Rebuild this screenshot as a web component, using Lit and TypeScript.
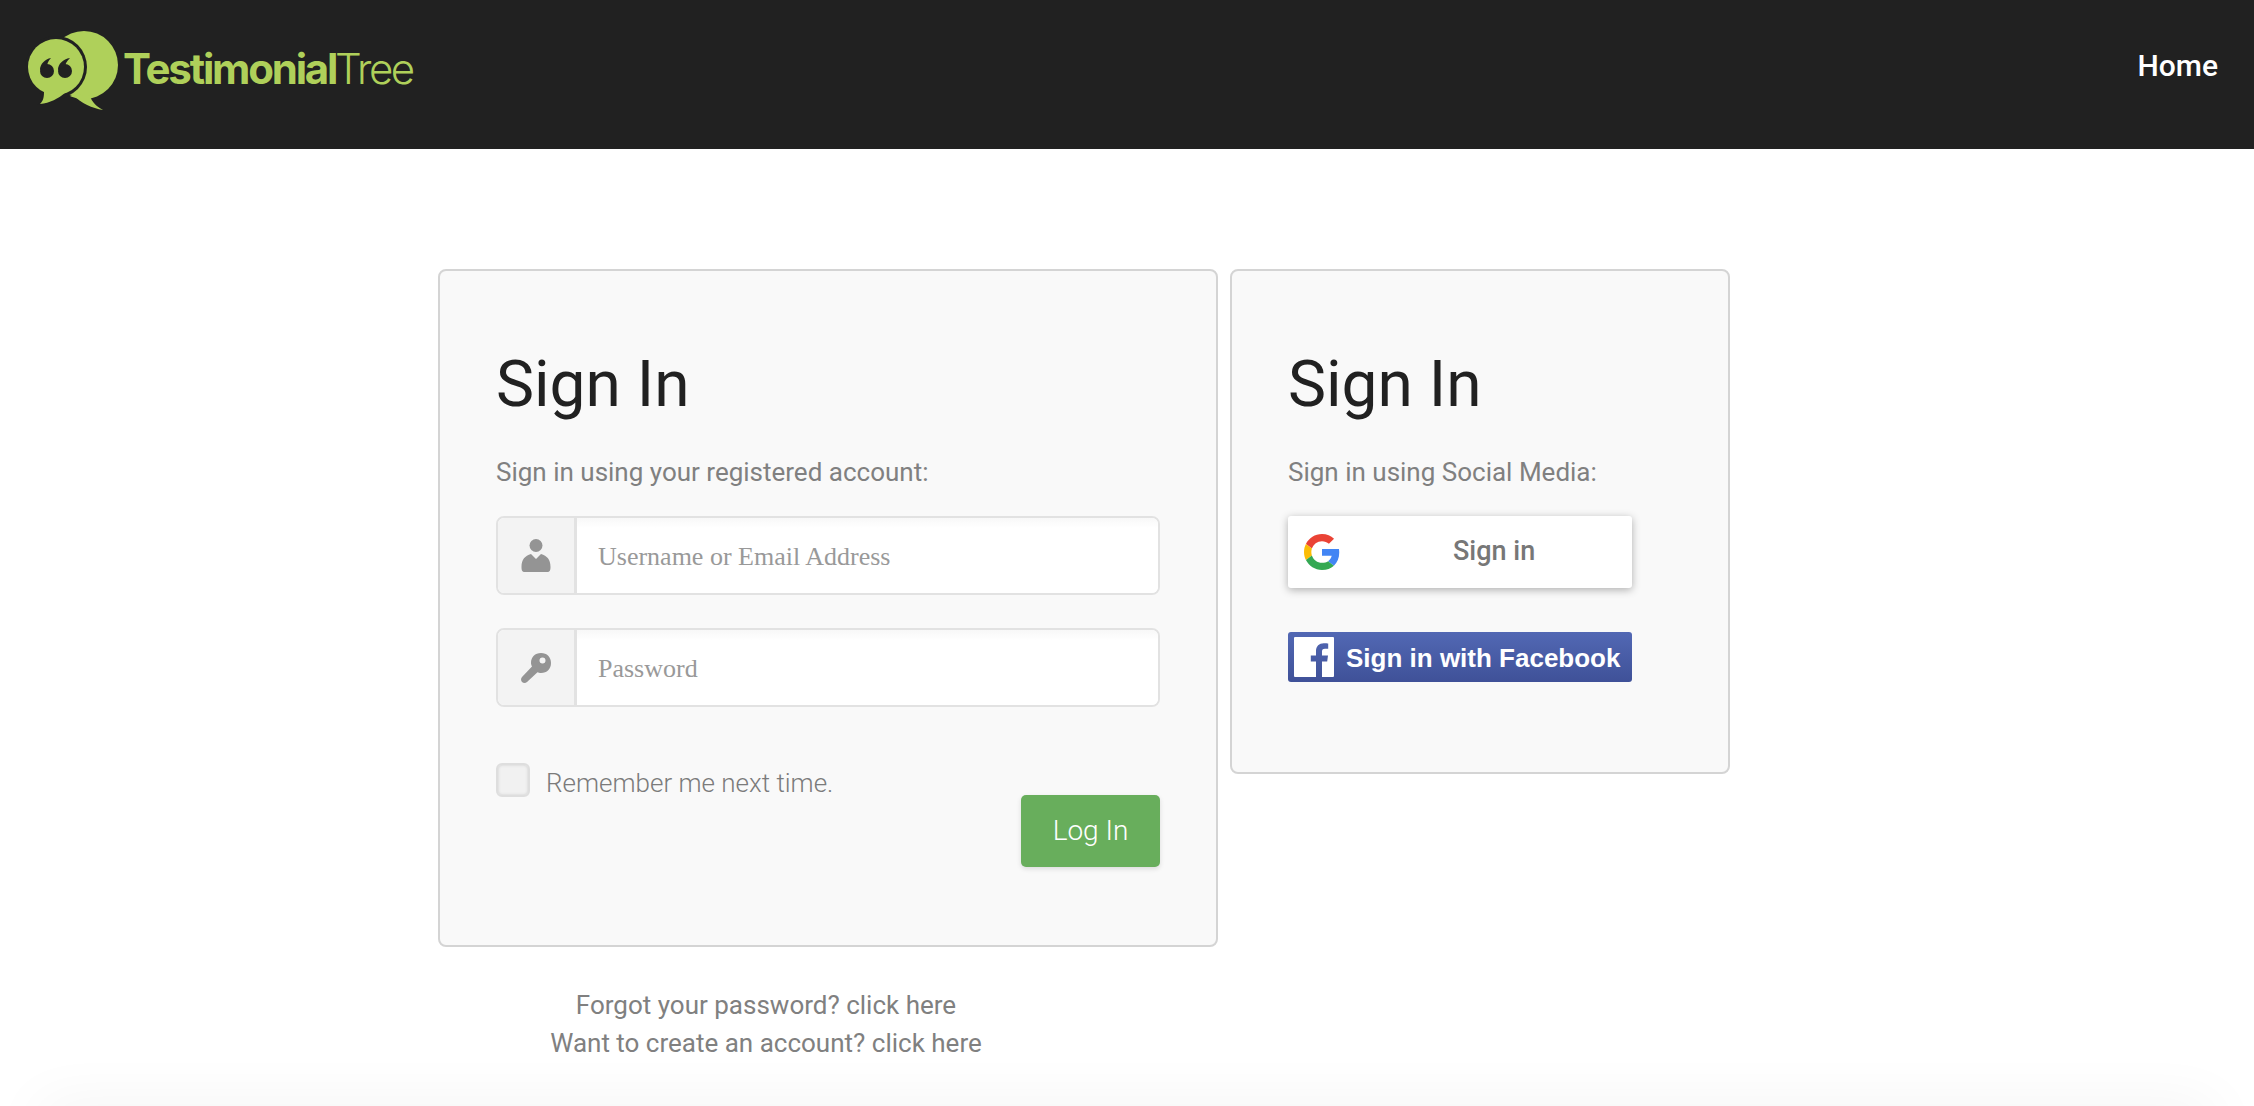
import { LitElement, html, css } from "lit";
import { customElement } from "lit/decorators.js";

@customElement("app-root")
export class AppRoot extends LitElement {
  static styles = css`
    :host { display: block; height: 1106px; overflow: hidden; background: #fff; font-family: Roboto, sans-serif; color: #808080; position: relative; }
    * { box-sizing: border-box; }
    .top { height: 149px; background: #212121; display: flex; justify-content: space-between; align-items: flex-start; }
    .brand { display: flex; align-items: flex-start; }
    .logo { display: block; flex: none; width: 123px; height: 149px; }
    .word { margin-top: 48px; font-family: Inter, sans-serif; font-size: 42px; line-height: 42px; color: #afd05a; white-space: nowrap; }
    .word.b { font-weight: 700; letter-spacing: -2.2px; width: 212px; }
    .word.l { font-weight: 300; letter-spacing: -2.4px; }
    .home { font-size: 30px; font-weight: 500; color: #fff; margin: 48px 36px 0 0; line-height: 36px; }
    .main { display: flex; align-items: flex-start; gap: 12px; padding: 120px 0 0 438px; height: 957px; }
    .left { width: 780px; }
    .card { background: #f9f9f9; border: 2px solid #d4d4d4; border-radius: 8px; padding: 75px 56px 0; }
    .card.a { height: 678px; }
    .card.b { width: 500px; height: 505px; }
    h1 { margin: 0; font-size: 64px; line-height: 78px; font-weight: 400; color: #212121; }
    .sub { margin: 30px 0 0; font-size: 26px; line-height: 36px; }
    .field { display: flex; height: 79px; margin-top: 33px; border: 2px solid #e2e2e2; border-radius: 8px; overflow: hidden; background: #fff; }
    .field.first { margin-top: 26px; }
    .addon { width: 79px; flex: none; background: #f3f3f3; border-right: 3px solid #e2e2e2; display: flex; align-items: center; justify-content: center; }
    .addon svg { display: block; fill: #949494; }
    input { flex: 1; min-width: 0; border: 0; outline: 0; background: linear-gradient(#f8f8f8, #fff 10px); padding: 2px 21px 0; font-family: "Liberation Serif", serif; font-size: 26px; color: #333; }
    input::placeholder { color: #999; opacity: 1; }
    .actions { position: relative; margin-top: 56px; height: 104px; }
    .remember { display: flex; align-items: flex-start; gap: 16px; font-size: 26px; font-weight: 300; line-height: 40px; color: #7b7b7b; }
    .box { width: 34px; height: 34px; flex: none; background: #f1f1f1; border: 2px solid #dedede; border-radius: 6px; box-shadow: inset 0 0 3px #ccc; }
    .login { position: absolute; right: 0; top: 32px; width: 139px; height: 72px; border: 0; padding: 0 0 2px; border-radius: 5px; background: #68ae5c; color: #fff; font-family: Roboto, sans-serif; font-size: 28px; font-weight: 300; box-shadow: 0 2px 5px rgba(0,0,0,.12); }
    .links { width: 656px; text-align: center; font-size: 26px; line-height: 38px; margin-top: 39px; }
    .g { display: flex; align-items: center; width: 344px; height: 72px; margin-top: 26px; background: #fff; border-radius: 3px; box-shadow: 0 2px 8px rgba(0,0,0,.3); padding-left: 16px; font-size: 27px; font-weight: 500; color: #777; }
    .g svg { display: block; flex: none; }
    .g span { margin-left: 113px; padding-bottom: 3px; }
    .fb { display: flex; align-items: center; width: 344px; height: 50px; margin-top: 44px; padding-left: 6px; border-radius: 3px; background: linear-gradient(#5268b4, #3f5198); color: #fff; font-family: "Liberation Sans", sans-serif; font-weight: 700; font-size: 26px; }
    .fb svg { display: block; flex: none; margin-right: 13px; }
    .fb span { padding-top: 2px; margin-left: -1px; }
    .shade { height: 40px; margin: 0 40px; box-shadow: 0 0 60px rgba(0,0,0,.06); }
  `;

  render() {
    return html`
      <header class="top">
        <div class="brand">
          <svg class="logo" viewBox="0 0 123 149">
            <circle cx="84" cy="65" r="34" fill="#afd05a"></circle>
            <path d="M72 94 C82 104 92 108 103 110 C96 106 92 102 90 96Z" fill="#afd05a"></path>
            <circle cx="56" cy="67" r="31" fill="#212121"></circle>
            <path d="M44 90 C44 96 42 101 37 105 C48 104 58 101 72 95Z" fill="#212121"></path>
            <circle cx="56" cy="67" r="28" fill="#afd05a"></circle>
            <path d="M44 90 C44 96 44 100 40 104 C50 103 58 99 66 92Z" fill="#afd05a"></path>
            <g fill="#212121">
              <circle cx="47" cy="71" r="7"></circle>
              <path d="M40 70 C40 64 45 59 51 58 C48 61 47 64 47 67Z"></path>
              <circle cx="65" cy="71" r="7"></circle>
              <path d="M58 70 C58 64 63 59 70 58 C67 61 65 64 65 67Z"></path>
            </g>
          </svg>
          <span class="word b">Testimonial</span>
          <span class="word l">Tree</span>
        </div>
        <div class="home">Home</div>
      </header>
      <main class="main">
        <div class="left">
          <section class="card a">
            <h1>Sign In</h1>
            <p class="sub">Sign in using your registered account:</p>
            <div class="field first">
              <div class="addon">
                <svg width="30" height="33" viewBox="0 0 30 33"><circle cx="15" cy="6.500" r="6.500"></circle><path d="M4 33 C1 33 .5 31 .5 28 C.5 20 4 17 10 15 L15 20 L20 15 C26 17 29.500 20 29.500 28 C29.500 31 29 33 26 33Z"></path></svg>
              </div>
              <input placeholder="Username or Email Address" />
            </div>
            <div class="field">
              <div class="addon">
                <svg width="30" height="30" viewBox="0 0 30 30"><path fill-rule="evenodd" d="M20 0 C26 0 30 4 30 10 C30 16 26 20 20 20 C18.500 20 17.500 19.700 16.500 19.300 L6 29 C4.500 30.300 2.500 30.300 1 29 C-.3 27.500 -.3 25.500 1 24 L11 13.500 C10.300 12 10 11 10 10 C10 4 14 0 20 0Z M21.500 4.500 A3 3 0 1 0 21.510 10.500 A3 3 0 1 0 21.500 4.500Z"></path></svg>
              </div>
              <input placeholder="Password" />
            </div>
            <div class="actions">
              <div class="remember"><span class="box"></span><span>Remember me next time.</span></div>
              <button class="login">Log In</button>
            </div>
          </section>
          <div class="links">Forgot your password? click here<br />Want to create an account? click here</div>
        </div>
        <section class="card b">
          <h1>Sign In</h1>
          <p class="sub">Sign in using Social Media:</p>
          <div class="g">
            <svg width="36" height="36" viewBox="0 0 48 48"><path fill="#EA4335" d="M24 9.500c3.540 0 6.710 1.220 9.210 3.600l6.850-6.850C35.900 2.380 30.470 0 24 0 14.620 0 6.510 5.380 2.560 13.220l7.980 6.190C12.430 13.720 17.740 9.500 24 9.500z"></path><path fill="#4285F4" d="M46.980 24.550c0-1.570-.15-3.090-.38-4.550H24v9.020h12.940c-.58 2.960-2.260 5.480-4.780 7.180l7.730 6c4.510-4.180 7.090-10.360 7.090-17.650z"></path><path fill="#FBBC05" d="M10.530 28.590c-.48-1.450-.76-2.990-.76-4.590s.27-3.140.76-4.590l-7.980-6.190C.92 16.460 0 20.120 0 24c0 3.880.92 7.540 2.560 10.780l7.970-6.190z"></path><path fill="#34A853" d="M24 48c6.480 0 11.930-2.130 15.890-5.810l-7.730-6c-2.150 1.450-4.920 2.300-8.160 2.300-6.260 0-11.570-4.220-13.470-9.910l-7.980 6.190C6.510 42.620 14.620 48 24 48z"></path></svg>
            <span>Sign in</span>
          </div>
          <div class="fb">
            <svg width="40" height="40" viewBox="0 0 40 40"><path fill="#fff" d="M1 0h38a1 1 0 0 1 1 1v38a1 1 0 0 1-1 1H28V24.500h5.200l.8-6H28v-3.800c0-1.800.5-2.900 3-2.900h3.200V6.400C33.600 6.300 31.800 6.200 29.700 6.200c-4.500 0-7.700 2.800-7.700 7.900v4.400h-5.200v6H22V40H1a1 1 0 0 1-1-1V1a1 1 0 0 1 1-1z"></path></svg>
            <span>Sign in with Facebook</span>
          </div>
        </section>
      </main>
      <div class="shade"></div>
    `;
  }
}
